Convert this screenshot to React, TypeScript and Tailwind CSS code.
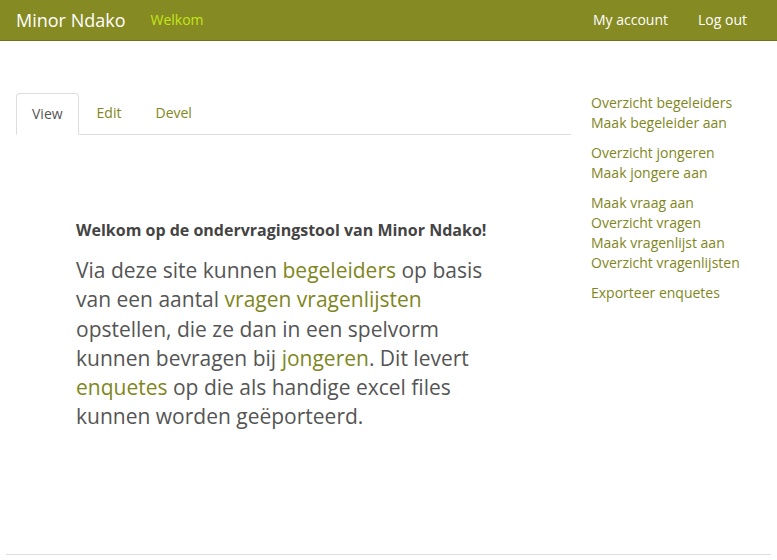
const sideGroups = [
  ["Overzicht begeleiders", "Maak begeleider aan"],
  ["Overzicht jongeren", "Maak jongere aan"],
  ["Maak vraag aan", "Overzicht vragen", "Maak vragenlijst aan", "Overzicht vragenlijsten"],
  ["Exporteer enquetes"],
];

export default function App() {
  return (
    <div className="flex h-[560px] flex-col bg-white font-['Open_Sans',sans-serif] text-[#555]">
      <nav className="flex h-[41px] shrink-0 items-center border-b border-[#6f7219] bg-[#868a23] pl-4 pr-[30px]">
        <a className="text-[18px] text-white">Minor Ndako</a>
        <a className="ml-[25px] text-sm text-[#c3e619]">Welkom</a>
        <div className="ml-auto flex gap-[30px] text-sm text-white">
          <a>My account</a>
          <a>Log out</a>
        </div>
      </nav>

      <div className="flex pl-4 pt-[52px]">
        <main className="w-[555px]">
          <ul className="flex border-b border-[#ddd] text-sm">
            <li className="-mb-px rounded-t-sm border border-b-white border-[#ddd] bg-white px-[15px] py-[10px] leading-5 text-[#555]">
              View
            </li>
            <li className="ml-0.5 px-4 py-[10px] leading-5 text-[#7f861c]">Edit</li>
            <li className="ml-0.5 px-4 py-[10px] leading-5 text-[#7f861c]">Devel</li>
          </ul>

          <section className="w-[485px] pl-[60px] pt-[85px]">
            <h1 className="text-[16px] font-bold leading-5 text-[#444]">
              Welkom op de ondervragingstool van Minor Ndako!
            </h1>
            <p className="mt-4 text-[21px] leading-[29.3px] text-[#555]">
              Via deze site kunnen <a className="text-[#7f861c]">begeleiders</a> op basis van een aantal{" "}
              <a className="text-[#7f861c]">vragen vragenlijsten</a> opstellen, die ze dan in een spelvorm kunnen
              bevragen bij <a className="text-[#7f861c]">jongeren</a>. Dit levert{" "}
              <a className="text-[#7f861c]">enquetes</a> op die als handige excel files kunnen worden geëporteerd.
            </p>
          </section>
        </main>

        <aside className="ml-5 flex flex-col gap-[10px] text-sm leading-5 text-[#7f861c]">
          {sideGroups.map((group, i) => (
            <ul key={i}>
              {group.map((item) => (
                <li key={item}>
                  <a>{item}</a>
                </li>
              ))}
            </ul>
          ))}
        </aside>
      </div>

      <div className="mx-[6px] mb-[5px] mt-auto border-t border-[#ddd]" />
    </div>
  );
}
